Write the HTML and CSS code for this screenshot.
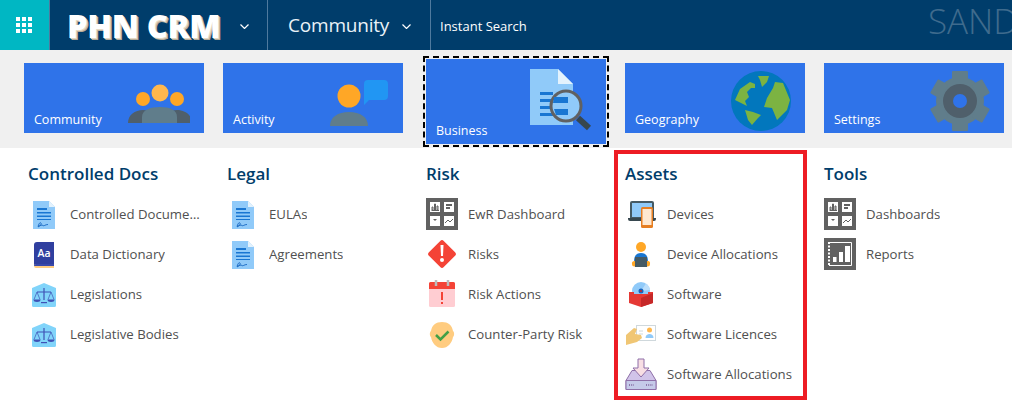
FILE: index.html
```html
<!DOCTYPE html>
<html lang="en">
<head>
    <meta charset="UTF-8">
    <title>PHN CRM</title>
    <link rel="stylesheet" href="styles.css">
</head>
<body>

<!-- Shared icons -->
<svg class="icon-defs" aria-hidden="true">
    <symbol id="i-doc" viewBox="0 0 32 32">
        <path d="M5 3h16l6 6v22H5z" fill="#90caf9"/>
        <path d="M21 3l6 6h-6z" fill="#e3f2fd"/>
        <path d="M9 10h10v2H9zM9 14h14v1.500H9zM9 17.500h14V19H9zM9 21h14v1H9z" fill="#1976d2"/>
        <path d="M10 28.500c1-3 2-4.500 3-3.500s-2 4.500-3 3.500c2-1 4-2 5-1s2-1 5-1" fill="none" stroke="#1565c0" stroke-width=".9"/>
    </symbol>
    <symbol id="i-scales" viewBox="0 0 32 32">
        <path d="M16 5l12 5v17.500a1.500 1.500 0 0 1-1.500 1.500h-21A1.500 1.500 0 0 1 4 27.500V10z" fill="#81d4fa"/>
        <path d="M16 10v12M9 14h14" stroke="#3f51b5" stroke-width="1.200"/>
        <path d="M9 14l-3 7.500M9 14l3 7.500M23 14l-3 7.500M23 14l3 7.500" stroke="#3f51b5" stroke-width=".7" fill="none"/>
        <path d="M5.500 21.500h7a3.500 2.500 0 0 1-7 0zM19.500 21.500h7a3.500 2.500 0 0 1-7 0z" fill="#3f51b5"/>
        <path d="M13 24h6v1.200h-6z" fill="#3f51b5"/>
    </symbol>
    <symbol id="i-dash" viewBox="0 0 32 32">
        <rect width="32" height="32" fill="#616161"/>
        <rect x="4" y="4" width="10" height="10" fill="#fff"/>
        <rect x="18" y="4" width="10" height="10" fill="#fff"/>
        <rect x="4" y="18" width="10" height="10" fill="#fff"/>
        <rect x="18" y="18" width="10" height="10" fill="#fff"/>
        <path d="M6 12V9h1v3zM8.500 12V6h1v6zM11 12V8h1v4zM5.500 12.500h7.500" stroke="#616161" stroke-width="1" fill="none"/>
        <path d="M20 6h6v2h-6zM20 9h4v2h-4z" fill="#616161"/>
        <path d="M7 21h4l-2 2z" fill="#616161"/>
        <path d="M19 25l3-3 2 2 3-3" stroke="#616161" stroke-width="1" fill="none"/>
    </symbol>
</svg>

<header class="topbar">
    <div class="waffle">
        <svg width="16" height="16" viewBox="0 0 16 16" fill="#fff">
            <path d="M0 0h4v4H0zM6 0h4v4H6zM12 0h4v4h-4zM0 6h4v4H0zM6 6h4v4H6zM12 6h4v4h-4zM0 12h4v4H0zM6 12h4v4H6zM12 12h4v4h-4z"/>
        </svg>
    </div>
    <div class="nav-item nav-logo">
        <span class="logo">PHN CRM</span>
        <svg class="chevron" width="9" height="5" viewBox="0 0 9 5"><path d="M.5.500l4 4 4-4"/></svg>
    </div>
    <div class="nav-item nav-area">
        <span>Community</span>
        <svg class="chevron" width="9" height="5" viewBox="0 0 9 5"><path d="M.5.500l4 4 4-4"/></svg>
    </div>
    <div class="search">Instant Search</div>
    <div class="env">SAND</div>
</header>

<section class="tiles">
    <a class="tile">
        <span class="tile-label">Community</span>
        <svg class="tile-icon" width="72" height="70" viewBox="-2 0 72 70">
            <circle cx="23" cy="36" r="7" fill="#ffa726"/>
            <circle cx="57" cy="36" r="7" fill="#ffa726"/>
            <path d="M8 60c0-8 7-13 15-13s12 5 17 5 9-5 17-5 15 5 15 13z" fill="#4f5f6b"/>
            <circle cx="40" cy="30" r="8.500" fill="#ffb74d"/>
            <path d="M22 60v-6c0-7 8-10 18-10s17 3 17 10v6z" fill="#607d8b"/>
        </svg>
    </a>
    <a class="tile">
        <span class="tile-label">Activity</span>
        <svg class="tile-icon" width="72" height="70" viewBox="0 0 72 70">
            <path d="M47 21a4 4 0 0 1 4-4h16a4 4 0 0 1 4 4v12a4 4 0 0 1-4 4H52l-5 5z" fill="#2196f3"/>
            <circle cx="32" cy="33" r="11.500" fill="#ffa726"/>
            <path d="M13 63c0-9 8-14 19-14s19 5 19 14z" fill="#607d8b"/>
        </svg>
    </a>
    <a class="tile tile-focus">
        <span class="tile-label">Business</span>
        <svg class="tile-icon" width="76" height="85" viewBox="2 0 76 85">
            <path d="M16 10h28l15 15v41H16z" fill="#90caf9"/>
            <path d="M44 10l15 15H44z" fill="#e3f2fd"/>
            <path d="M26 33h13v3H26zM26 40h13v3H26zM26 47h13v3H26zM26 54h13v3H26z" fill="#1976d2"/>
            <circle cx="52" cy="47" r="15" fill="#90caf9" stroke="#616161" stroke-width="3"/>
            <path d="M40 38h14v6H39zM40 50h14v6H42z" fill="#1976d2"/>
            <path d="M64 59l11 10" stroke="#37474f" stroke-width="6"/>
        </svg>
    </a>
    <a class="tile">
        <span class="tile-label">Geography</span>
        <svg class="tile-icon" width="74" height="70" viewBox="0 0 74 70">
            <g transform="translate(14 8)">
                <circle cx="30" cy="30" r="30" fill="#0277bd"/>
                <path d="M4 29l5-11 10-7 5 2v4h-4l-4 4 2 5-4 4 2 5-6-3zM14 39l8 2 8 3-3 3-6 7-4-5zM27 5h11l-2 6-5 5-2-7zM44 11l8 1 7 17-3 10-10 10-5-12-8-1 3-9 6-10z" fill="#7cb342"/>
            </g>
        </svg>
    </a>
    <a class="tile">
        <span class="tile-label">Settings</span>
        <svg class="tile-icon" width="74" height="70" viewBox="0 0 74 70">
            <g transform="translate(44 38)">
                <circle r="24" fill="#607d8b"/>
                <rect x="-8" y="-30" width="16" height="12" rx="1" fill="#607d8b"/>
                <rect x="-8" y="-30" width="16" height="12" rx="1" fill="#607d8b" transform="rotate(60)"/>
                <rect x="-8" y="-30" width="16" height="12" rx="1" fill="#607d8b" transform="rotate(120)"/>
                <rect x="-8" y="-30" width="16" height="12" rx="1" fill="#607d8b" transform="rotate(180)"/>
                <rect x="-8" y="-30" width="16" height="12" rx="1" fill="#607d8b" transform="rotate(240)"/>
                <rect x="-8" y="-30" width="16" height="12" rx="1" fill="#607d8b" transform="rotate(300)"/>
                <circle r="17" fill="#4f5f6b"/>
                <circle r="7" fill="#2f73e9"/>
            </g>
        </svg>
    </a>
</section>

<main class="menu">
    <div class="group">
        <h3>Controlled Docs</h3>
        <div class="item"><svg class="icon"><use href="#i-doc"/></svg><span class="item-text">Controlled Documents</span></div>
        <div class="item">
            <svg class="icon" viewBox="0 0 32 32">
                <path d="M6 7a3 3 0 0 1 3-3h17v24H6z" fill="#303f9f"/>
                <path d="M6 28a2 2 0 0 1 2-2h18v4H8a2 2 0 0 1-2-2z" fill="#ffcc80"/>
                <path d="M6 28h20v-2H8a2 2 0 0 0-2 2z" fill="#3949ab"/>
                <text x="16" y="18.500" class="icon-aa">Aa</text>
            </svg>
            <span class="item-text">Data Dictionary</span>
        </div>
        <div class="item"><svg class="icon"><use href="#i-scales"/></svg><span class="item-text">Legislations</span></div>
        <div class="item"><svg class="icon"><use href="#i-scales"/></svg><span class="item-text">Legislative Bodies</span></div>
    </div>

    <div class="group">
        <h3>Legal</h3>
        <div class="item"><svg class="icon"><use href="#i-doc"/></svg><span class="item-text">EULAs</span></div>
        <div class="item"><svg class="icon"><use href="#i-doc"/></svg><span class="item-text">Agreements</span></div>
    </div>

    <div class="group">
        <h3>Risk</h3>
        <div class="item"><svg class="icon"><use href="#i-dash"/></svg><span class="item-text">EwR Dashboard</span></div>
        <div class="item">
            <svg class="icon" viewBox="0 0 32 32">
                <rect x="5.500" y="5.500" width="21" height="21" rx="2.500" fill="#f44336" transform="rotate(45 16 16)"/>
                <path d="M14.500 7h3l-.5 11h-2z" fill="#fff"/>
                <circle cx="16" cy="22" r="2" fill="#fff"/>
            </svg>
            <span class="item-text">Risks</span>
        </div>
        <div class="item">
            <svg class="icon" viewBox="0 0 32 32">
                <rect x="3" y="4" width="26" height="25" rx="1.500" fill="#ffcdd2"/>
                <path d="M3 5.500A1.500 1.500 0 0 1 4.500 4h23A1.500 1.500 0 0 1 29 5.500V11H3z" fill="#f44336"/>
                <path d="M10 2v6M22 2v6" stroke="#bdbdbd" stroke-width="2.500"/>
                <path d="M15 14h2v8h-2zM15 24h2v2h-2z" fill="#f44336"/>
            </svg>
            <span class="item-text">Risk Actions</span>
        </div>
        <div class="item">
            <svg class="icon" viewBox="0 0 32 32">
                <path d="M16 4c6 0 10 3 11 9 1.500 1 1.500 5 0 6-1 6-5 11-11 11S6 25 5 19c-1.500-1-1.500-5 0-6C6 7 10 4 16 4z" fill="#ffcc80"/>
                <path d="M10 17l4.500 4.500 8-8" fill="none" stroke="#43a047" stroke-width="2.500"/>
            </svg>
            <span class="item-text">Counter-Party Risk</span>
        </div>
    </div>

    <div class="group group-marked">
        <h3>Assets</h3>
        <div class="item">
            <svg class="icon" viewBox="0 0 32 32">
                <path d="M5 5a2 2 0 0 1 2-2h20a2 2 0 0 1 2 2v15H5z" fill="#455a64"/>
                <rect x="7" y="5" width="20" height="14" fill="#90caf9"/>
                <path d="M3 20h28v1a2 2 0 0 1-2 2H5a2 2 0 0 1-2-2z" fill="#37474f"/>
                <rect x="16" y="9" width="12" height="21" rx="1.500" fill="#e67e22"/>
                <rect x="17.500" y="11" width="9" height="16" fill="#ffe8d0"/>
            </svg>
            <span class="item-text">Devices</span>
        </div>
        <div class="item">
            <svg class="icon" viewBox="0 0 32 32">
                <circle cx="16" cy="9" r="5" fill="#ffa726"/>
                <path d="M9 24c0-6 2-9 7-9s7 3 7 9z" fill="#1976d2"/>
                <path d="M7 26a2.500 2.500 0 0 1 5-1h8a2.500 2.500 0 0 1 5 1 2.500 2.500 0 0 1-2.500 2.500h-13A2.500 2.500 0 0 1 7 26z" fill="#ffa726"/>
                <rect x="10" y="19" width="12" height="10" fill="#455a64"/>
            </svg>
            <span class="item-text">Device Allocations</span>
        </div>
        <div class="item">
            <svg class="icon" viewBox="0 0 32 32">
                <circle cx="16" cy="13" r="9" fill="#90caf9"/>
                <path d="M16 13l5-7.500a9 9 0 0 1 4 6.500z" fill="#bbdefb"/>
                <circle cx="16" cy="13" r="2.500" fill="#1565c0"/>
                <circle cx="16" cy="13" r="1" fill="#c62828"/>
                <path d="M4 14h5v2h14v-2h5v11l-12 4-12-4z" fill="#e53935"/>
                <path d="M16 20l12-5v10l-12 4z" fill="#c62828"/>
            </svg>
            <span class="item-text">Software</span>
        </div>
        <div class="item">
            <svg class="icon" viewBox="0 0 32 32">
                <rect x="11.500" y="7.500" width="19" height="15" fill="#fff" stroke="#cfd8dc"/>
                <circle cx="24.500" cy="12" r="2.500" fill="#ffb74d"/>
                <path d="M20.500 20c0-3 2-4 4-4s4 1 4 4z" fill="#90caf9"/>
                <path d="M14 13h4M14 16h4" stroke="#cfd8dc"/>
                <path d="M1 17l8-7 3 1-2 5 6 1 1 3-5 4-11 3z" fill="#f0c674"/>
            </svg>
            <span class="item-text">Software Licences</span>
        </div>
        <div class="item">
            <svg class="icon" viewBox="0 0 32 32">
                <path d="M7 12.500h18l6 10v9H1v-9z" fill="#d1c4e9" stroke="#8e6fa8"/>
                <path d="M1 22.500h30v9H1z" fill="#c5cae9" stroke="#8e6fa8"/>
                <path d="M13 1h6v9h5l-8 9-8-9h5z" fill="#f8dfe4" stroke="#8e6fa8"/>
                <path d="M4 27h5M21 27h7" stroke="#7b5a96" stroke-dasharray="1 1.200" stroke-width="1.500"/>
            </svg>
            <span class="item-text">Software Allocations</span>
        </div>
    </div>

    <div class="group">
        <h3>Tools</h3>
        <div class="item"><svg class="icon"><use href="#i-dash"/></svg><span class="item-text">Dashboards</span></div>
        <div class="item">
            <svg class="icon" viewBox="0 0 32 32">
                <rect width="32" height="32" fill="#616161"/>
                <path d="M5 4.500h22.500v23H5" fill="none" stroke="#fff"/>
                <path d="M5 4v24" stroke="#fff" stroke-width="2" stroke-dasharray="2 1.500"/>
                <path d="M9 19h3.500v5H9zM15 14h4v10h-4zM21 8h5v16h-5z" fill="#fff"/>
            </svg>
            <span class="item-text">Reports</span>
        </div>
    </div>
</main>

</body>
</html>
```

FILE: styles.css
```css
/* Reset */
* {
    margin: 0;
    padding: 0;
    box-sizing: border-box;
}

body {
    font-family: "Open Sans", "Noto Sans", sans-serif;
    background-color: #fff;
    height: 400px;
    overflow: hidden;
}

.icon-defs {
    display: none;
}

/* Top bar */
.topbar {
    display: flex;
    height: 50px;
    background-color: #003d6b;
    color: #fff;
    overflow: hidden;
}

.waffle {
    width: 50px;
    flex-shrink: 0;
    display: flex;
    align-items: center;
    justify-content: center;
    background-color: #00b7c3;
    border-right: 1px solid #4f7a9e;
    padding-right: 1px;
}

.nav-item {
    flex-shrink: 0;
    display: flex;
    align-items: center;
    justify-content: space-between;
    border-right: 1px solid #4f7a9e;
}

.nav-logo {
    width: 218px;
    padding: 0 18px;
}

.logo {
    margin-left: -1px;
    font-size: 32.5px;
    font-weight: 800;
    letter-spacing: -0.3px;
    text-shadow: 1px 1px 0 #e4d8c4, 2px 2px 0 #b8ac9a;
}

.nav-area {
    width: 163px;
    padding: 0 19px 0 20px;
    font-size: 19px;
    letter-spacing: -0.2px;
    color: #eaf2f8;
}

.chevron {
    fill: none;
    stroke: #fff;
    stroke-width: 1.2;
    margin-top: 3px;
}

.search {
    flex: 1;
    padding-left: 9px;
    line-height: 52px;
    font-size: 13px;
}

.env {
    width: 84px;
    flex-shrink: 0;
    font-size: 35px;
    font-weight: 300;
    line-height: 42px;
    white-space: nowrap;
    color: #3f6b8d;
}

/* Tile band */
.tiles {
    display: flex;
    align-items: flex-start;
    gap: 19px;
    height: 98px;
    padding: 13px 0 0 24px;
    background-color: #f0f0f0;
}

.tile {
    width: 180px;
    height: 70px;
    flex-shrink: 0;
    display: flex;
    justify-content: space-between;
    align-items: flex-end;
    background-color: #2f73e9;
    color: #fff;
}

.tile-label {
    padding: 0 0 4px 10px;
    font-size: 12.5px;
    line-height: 18px;
}

.tile-icon {
    flex-shrink: 0;
    margin-right: 14px;
}

/* Keyboard focus on the current tile */
.tile-focus {
    height: 85px;
    margin: -4px 0 0 4px;
    outline: 2px dashed #000;
    outline-offset: 1px;
}

/* Menu groups */
.menu {
    display: grid;
    grid-template-columns: repeat(5, 199px);
    padding: 6px 0 0 28px;
}

.group {
    position: relative;
    min-width: 0;
}

.group h3 {
    height: 40px;
    font-size: 17px;
    font-weight: 600;
    line-height: 40px;
    color: #003d6b;
}

.group-marked::after {
    content: "";
    box-sizing: border-box;
    position: absolute;
    left: -11px;
    top: -4px;
    width: 193px;
    height: 250px;
    border: 4px solid #ed1c24;
    pointer-events: none;
}

.item {
    display: flex;
    align-items: center;
    gap: 10px;
    height: 40px;
    font-size: 13.2px;
    color: #505050;
}

.icon {
    width: 32px;
    height: 32px;
    flex-shrink: 0;
}

.icon-aa {
    font-family: "Open Sans", sans-serif;
    font-size: 10.5px;
    font-weight: 600;
    fill: #fff;
    text-anchor: middle;
}

.item-text {
    max-width: 132px;
    white-space: nowrap;
    overflow: hidden;
    text-overflow: ellipsis;
}
```
